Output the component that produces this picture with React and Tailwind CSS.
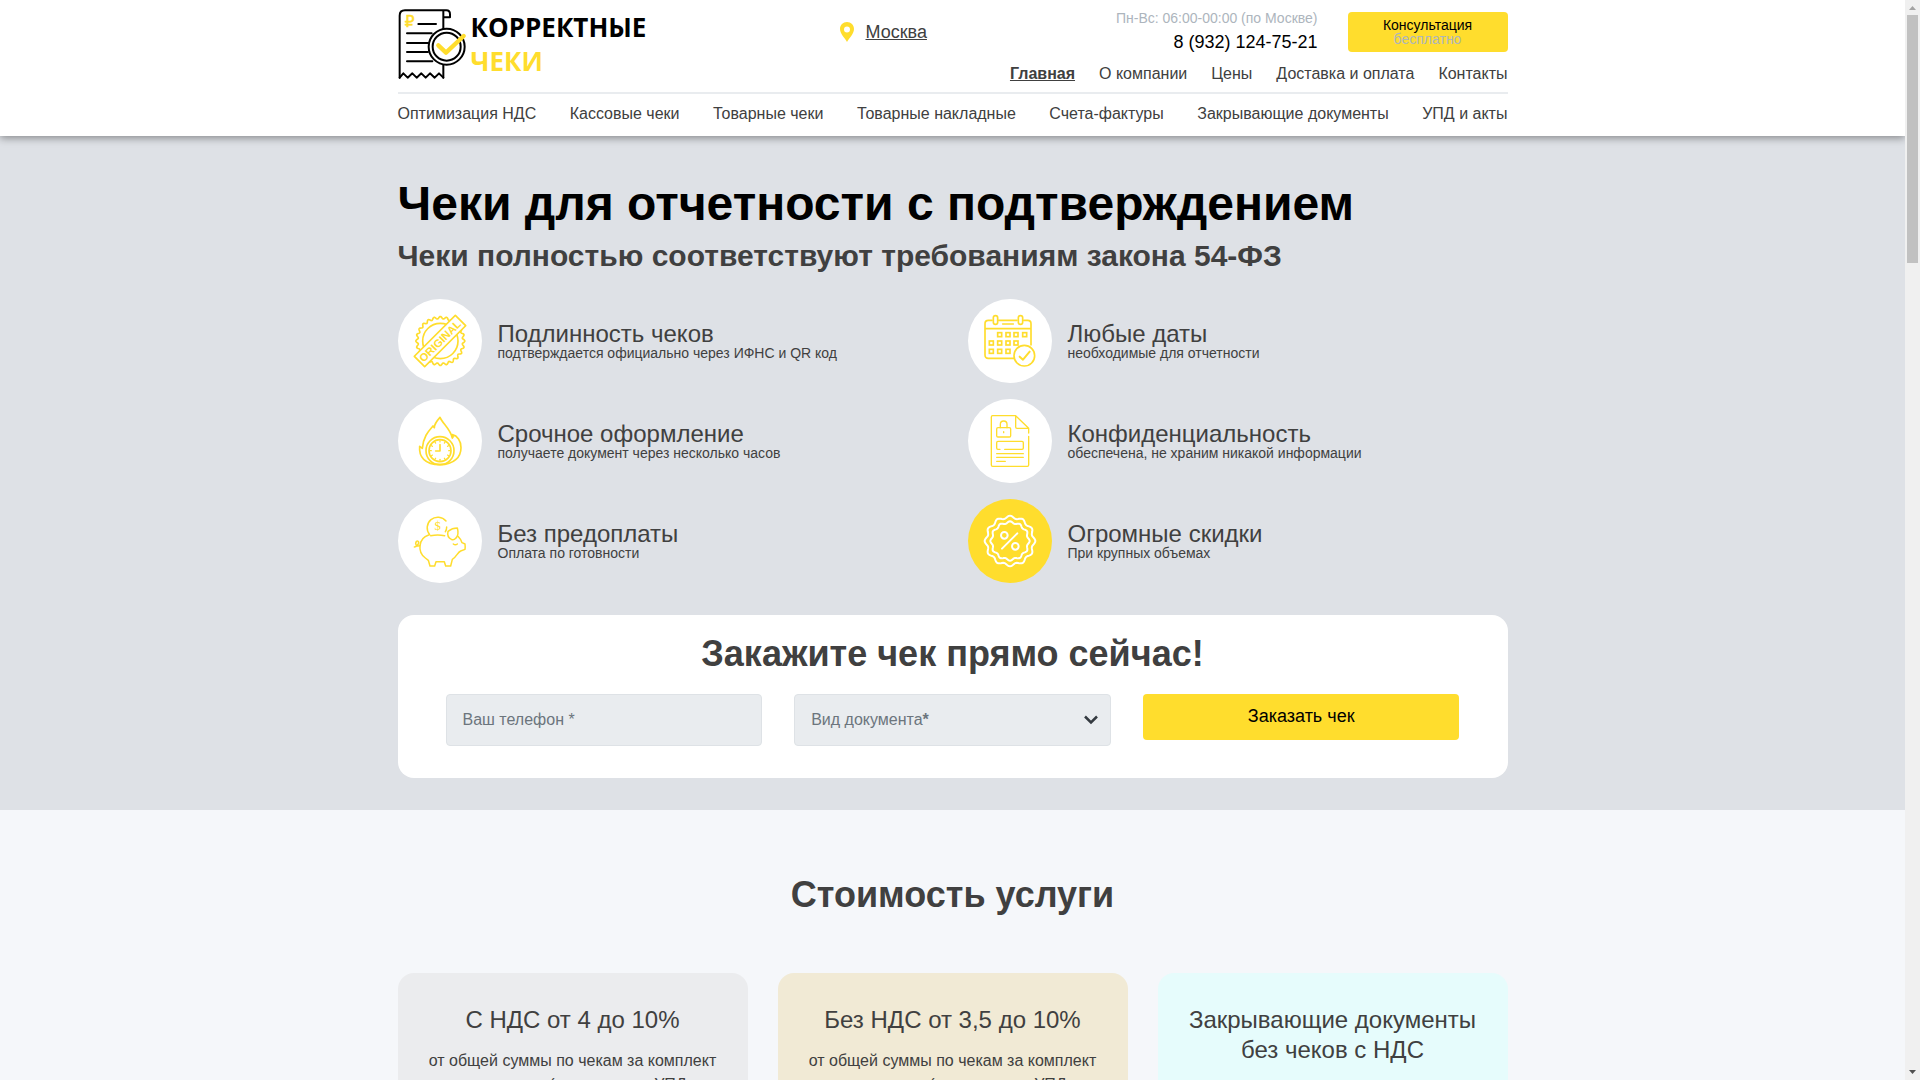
import React from "react";

const YELLOW = "#ffdd2d";

function wavyCircle(cx, cy, r, amp, lobes) {
  const pts = [];
  const steps = lobes * 12;
  for (let i = 0; i < steps; i++) {
    const a = (i / steps) * Math.PI * 2;
    const rr = r + amp * Math.cos(a * lobes);
    pts.push((cx + rr * Math.cos(a)).toFixed(1) + " " + (cy + rr * Math.sin(a)).toFixed(1));
  }
  return "M" + pts.join("L") + "Z";
}

function Icon({ children, width = 5 }) {
  return (
    <svg
      viewBox="0 0 252 252"
      className="size-full"
      fill="none"
      stroke="currentColor"
      strokeWidth={width}
      strokeLinecap="round"
      strokeLinejoin="round"
      aria-hidden="true"
    >
      {children}
    </svg>
  );
}

const OriginalIcon = () => (
  <Icon>
    <path d={wavyCircle(127, 126, 70, 3.5, 24)} />
    <circle cx="127" cy="126" r="53" />
    <g transform="rotate(-45 126 126)">
      <rect x="39" y="104" width="174" height="44" fill="#fff" />
      <text
        x="126"
        y="138"
        textAnchor="middle"
        fontFamily="Liberation Sans, sans-serif"
        fontWeight="700"
        fontSize="33"
        fill="currentColor"
        stroke="none"
      >
        ORIGINAL
      </text>
    </g>
  </Icon>
);

const CLOCK_TICKS = [0, 30, 60, 90, 120, 150, 180, 210, 240, 270, 300, 330];

const FireIcon = () => (
  <Icon width={5}>
    <path d="M126 55C116 66 109 75 109 86L105 81C92 96 76 112 73 148L65 142C62 173 80 197 126 197C170 197 189 172 189 146C189 125 178 110 163 107C166 111 166 115 163 117C157 90 134 74 126 55Z" />
    <circle cx="126" cy="155" r="42" />
    <circle cx="126" cy="155" r="33" />
    <path d="M126 137V156H113" />
    {CLOCK_TICKS.map((a) => (
      <path key={a} d="M126 125V129" transform={`rotate(${a} 126 155)`} strokeWidth="3.5" />
    ))}
  </Icon>
);

const PigIcon = () => (
  <Icon width={4.5}>
    <path d="M95 107A30 30 0 1 1 144 66M146 84Q146 93 142 98" />
    <text
      x="119"
      y="92"
      textAnchor="middle"
      fontFamily="Liberation Serif, serif"
      fontSize="38"
      fill="currentColor"
      stroke="none"
    >
      $
    </text>
    <path d="M98 110Q119 106 140 110" />
    <path d="M92 108C60 118 58 160 82 177L91 184L96 201H110L114 188H139L143 201H158L163 181C176 174 178 160 188 156L201 151Q202 143 201 135L192 131Q188 120 180 112" />
    <path d="M150 97Q163 87 178 87Q184 108 173 118Q167 125 160 121Q146 114 150 97Z" />
    <path d="M166 135q6 5 12 0" />
    <path d="M66 140Q55 144 53 134Q54 124 61 127Q64 132 58 139Q54 144 49 144" />
  </Icon>
);

const DAYS = [
  [95, 107], [120, 107], [144, 107], [170, 107],
  [70, 132], [95, 132], [120, 132], [144, 132],
  [70, 157], [95, 157], [120, 157],
];

const CalendarIcon = () => (
  <Icon>
    <path d="M72 64H61Q51 64 51 74V168Q51 178 61 178H140M92 64H147M167 64H179Q189 64 189 74V138M51 89H189M104 75H136" />
    <rect x="76" y="50" width="13" height="26" rx="6.5" />
    <rect x="151" y="50" width="13" height="26" rx="6.5" />
    {DAYS.map(([x, y]) => (
      <rect key={x + "-" + y} x={x - 6} y={y - 6} width="12" height="12" strokeLinejoin="miter" />
    ))}
    <circle cx="169" cy="170" r="31" fill="#fff" />
    <path d="M155 173L165 182L185 158" strokeWidth="6" />
  </Icon>
);

const DocumentIcon = () => (
  <Icon width={4}>
    <path d="M182 102V88L143 50H74Q70 50 70 54V198Q70 202 74 202H178Q182 202 182 198V112M143 50V84Q143 88 147 88H182" />
    <rect x="86" y="86" width="42" height="28" rx="4" />
    <path d="M97 86V76A10 10 0 0 1 117 76V86M107 98V101" />
    <path d="M96 151H90Q86 151 86 147V131Q86 127 90 127H162Q166 127 166 131V147Q166 151 162 151H110" />
    <path d="M86 164H166M86 175H166M86 187H112" strokeWidth="4" />
  </Icon>
);

const DiscountIcon = () => (
  <Icon width={6}>
    <path d={wavyCircle(126, 126, 72, 4, 12)} />
    <path d={wavyCircle(126, 126, 56, 3, 12)} />
    <circle cx="109" cy="109" r="10" />
    <circle cx="142" cy="142" r="10" />
    <path d="M148 103L102 149" />
  </Icon>
);

const FEATURES = [
  { title: "Подлинность чеков", text: "подтверждается официально через ИФНС и QR код", icon: OriginalIcon },
  { title: "Любые даты", text: "необходимые для отчетности", icon: CalendarIcon },
  { title: "Срочное оформление", text: "получаете документ через несколько часов", icon: FireIcon },
  { title: "Конфиденциальность", text: "обеспечена, не храним никакой информации", icon: DocumentIcon },
  { title: "Без предоплаты", text: "Оплата по готовности", icon: PigIcon },
  { title: "Огромные скидки", text: "При крупных объемах", icon: DiscountIcon, accent: true },
];

const TOP_NAV = ["О компании", "Цены", "Доставка и оплата", "Контакты"];
const SERVICES = [
  "Оптимизация НДС",
  "Кассовые чеки",
  "Товарные чеки",
  "Товарные накладные",
  "Счета-фактуры",
  "Закрывающие документы",
  "УПД и акты",
];

const PRICES = [
  {
    title: "С НДС от 4 до 10%",
    text: "от общей суммы по чекам за комплект документов (накладные и УПД",
    bg: "bg-[#ebecee]",
  },
  {
    title: "Без НДС от 3,5 до 10%",
    text: "от общей суммы по чекам за комплект документов (накладные и УПД",
    bg: "bg-[#f1ead5]",
  },
  { title: "Закрывающие документы без чеков с НДС", text: "", bg: "bg-[#e6fcfc]" },
];

function Logo() {
  return (
    <a href="#" className="flex w-[250px] gap-1 pt-2">
      <svg viewBox="7 9 207 216" className="h-[72px] w-[69px] shrink-0" fill="none" aria-hidden="true">
        <g stroke="#000" strokeWidth="6" strokeLinecap="round" strokeLinejoin="round">
          <path d="M12 218V32Q12 16 28 16H152Q163 16 163 28V37H145M143 16V72M143 178V218" />
          <path d="M12 218L23 205L36 218L50 205L63 218L77 205L90 218L103 205L117 218L130 205L143 218" />
          <path d="M68 57H121M34 85H108M34 114H97M34 141H97M34 169H110" />
          <circle cx="153" cy="125" r="54" fill="#fff" />
          <circle cx="153" cy="125" r="42" />
        </g>
        <path d="M128 121L151 143L204 93" stroke={YELLOW} strokeWidth="13" strokeLinecap="round" strokeLinejoin="round" />
        <text
          x="27"
          y="67"
          fontFamily="DejaVu Sans, sans-serif"
          fontSize="46"
          fill={YELLOW}
          stroke={YELLOW}
          strokeWidth="1.5"
        >
          ₽
        </text>
      </svg>
      <span className="flex flex-col pt-0.5 font-['Open_Sans',sans-serif] text-[26px] font-bold leading-[34px]">
        <span className="text-black">КОРРЕКТНЫЕ</span>
        <span className="text-[#ffdd2d]">ЧЕКИ</span>
      </span>
    </a>
  );
}

function Header() {
  return (
    <header className="relative z-10 bg-white shadow-[0_2px_8px_rgba(0,0,0,0.4)]">
      <div className="mx-auto w-full max-w-[1110px]">
        <div className="flex border-b-2 border-[#e9ecef] pb-1.5">
          <Logo />
          <a href="#" className="mr-[83px] ml-auto flex items-center gap-3 self-start pt-[18px] text-lg">
            <svg viewBox="0 0 14 20" className="h-5 w-3.5" aria-hidden="true">
              <path
                fillRule="evenodd"
                fill={YELLOW}
                d="M7 0C3 0 0 3 0 7c0 5 5 9 7 13 2-4 7-8 7-13 0-4-3-7-7-7Zm0 4.500a3 3 0 1 1 0 6 3 3 0 0 1 0-6Z"
              />
            </svg>
            <span className="underline">Москва</span>
          </a>
          <div className="flex flex-col items-end">
            <div className="flex gap-[30px]">
              <div className="flex flex-col items-end pt-2">
                <span className="text-sm leading-5 text-[#adb5bd]">Пн-Вс: 06:00-00:00 (по Москве)</span>
                <a href="tel:+79321247521" className="text-lg leading-7 text-black">
                  8 (932) 124-75-21
                </a>
              </div>
              <button
                type="button"
                className="mt-3 flex h-10 w-40 flex-col items-center justify-center rounded bg-[#ffdd2d] text-sm leading-[14px] text-black"
              >
                <span>Консультация</span>
                <span className="text-[#adb5bd]">бесплатно</span>
              </button>
            </div>
            <nav className="mt-1.5 flex gap-6 leading-6">
              <a href="#" className="font-bold underline">
                Главная
              </a>
              {TOP_NAV.map((t) => (
                <a key={t} href="#">
                  {t}
                </a>
              ))}
            </nav>
          </div>
        </div>
        <nav className="flex justify-between pt-2 pb-[10px] leading-6">
          {SERVICES.map((t) => (
            <a key={t} href="#">
              {t}
            </a>
          ))}
        </nav>
      </div>
    </header>
  );
}

function OrderForm() {
  return (
    <form className="mt-8 rounded-2xl bg-white px-12 pt-[17px] pb-8">
      <h2 className="text-center text-4xl leading-[44px] font-bold">Закажите чек прямо сейчас!</h2>
      <div className="mt-[18px] grid grid-cols-3 items-start gap-8">
        <input
          type="tel"
          aria-label="Ваш телефон"
          placeholder="Ваш телефон *"
          className="h-[52px] w-full rounded border border-[#dee2e6] bg-[#e9ecef] px-4 placeholder:text-[#6c757d]"
        />
        <div className="relative">
          <select
            id="doc"
            defaultValue=""
            className="block h-[52px] w-full appearance-none rounded border border-[#dee2e6] bg-[#e9ecef] px-4"
          >
            <option value="" />
          </select>
          <label htmlFor="doc" className="pointer-events-none absolute inset-y-0 left-[17px] flex items-center text-[#6c757d]">
            Вид документа<b>*</b>
          </label>
          <svg
            viewBox="0 0 14 10"
            className="pointer-events-none absolute top-[21px] right-[13px] h-2.5 w-3.5"
            fill="none"
            stroke="#343a40"
            strokeWidth="2.500"
            aria-hidden="true"
          >
            <path d="M1 1.500L7 7.500L13 1.500" />
          </svg>
        </div>
        <button type="submit" className="h-[46px] rounded bg-[#ffdd2d] pb-0.5 text-lg leading-6 text-black">
          Заказать чек
        </button>
      </div>
    </form>
  );
}

function Hero() {
  return (
    <section className="bg-[#dee1e6] pt-10 pb-8">
      <div className="mx-auto w-full max-w-[1110px]">
        <h1 className="text-5xl leading-[56px] font-bold text-black">Чеки для отчетности с подтверждением</h1>
        <p className="mt-1.5 text-3xl leading-9 font-bold">Чеки полностью соответствуют требованиям закона 54-ФЗ</p>
        <ul className="mt-[25px] grid grid-cols-2 gap-x-[30px] gap-y-4">
          {FEATURES.map(({ title, text, icon: Glyph, accent }) => (
            <li key={title} className="flex items-center gap-4">
              <div
                className={
                  accent
                    ? "size-[84px] shrink-0 rounded-full bg-[#ffdd2d] text-white"
                    : "size-[84px] shrink-0 rounded-full bg-white text-[#ffdd2d]"
                }
              >
                <Glyph />
              </div>
              <div>
                <h3 className="text-2xl leading-6">{title}</h3>
                <p className="text-sm leading-[14px]">{text}</p>
              </div>
            </li>
          ))}
        </ul>
        <OrderForm />
      </div>
    </section>
  );
}

function Prices() {
  return (
    <section className="pt-[63px]">
      <div className="mx-auto w-full max-w-[1110px]">
        <h2 className="text-center text-4xl leading-[44px] font-bold">Стоимость услуги</h2>
        <div className="mt-14 grid grid-cols-3 gap-[30px]">
          {PRICES.map((p) => (
            <article key={p.title} className={"rounded-2xl px-6 py-8 text-center " + p.bg}>
              <h3 className="text-2xl leading-[30px]">{p.title}</h3>
              <p className="mt-3.5 leading-6">{p.text}</p>
            </article>
          ))}
        </div>
      </div>
    </section>
  );
}

function ScrollRail() {
  return (
    <div className="flex w-[15px] shrink-0 flex-col items-center bg-[#f0f0f0]" aria-hidden="true">
      <svg viewBox="0 0 15 15" className="h-[15px] w-full shrink-0">
        <path d="M4 10L7.500 6L11 10Z" fill="#a3a3a3" />
      </svg>
      <div className="h-[248px] w-[11px] shrink-0 bg-[#c1c1c1]" />
      <svg viewBox="0 0 15 15" className="mt-auto h-[15px] w-full shrink-0">
        <path d="M4 5L7.500 9L11 5Z" fill="#505050" />
      </svg>
    </div>
  );
}

export default function App() {
  return (
    <div className="flex h-screen overflow-hidden bg-[#f5f7fa] font-['Liberation_Sans',Arial,sans-serif] text-base text-[#404040]">
      <div className="min-w-0 flex-1 overflow-hidden">
        <Header />
        <main>
          <Hero />
          <Prices />
        </main>
      </div>
      <ScrollRail />
    </div>
  );
}
